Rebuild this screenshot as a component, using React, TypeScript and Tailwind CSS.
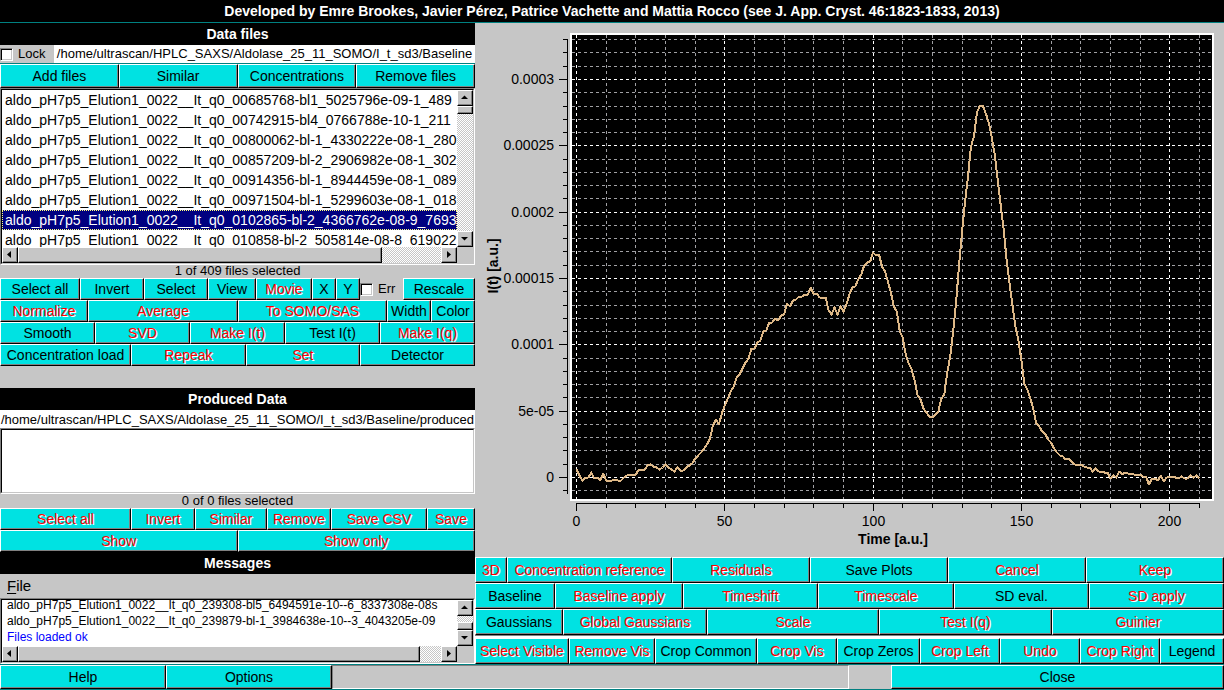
import React from "react";

type Cell = [label: string, active?: boolean];

function Btn({ label, active = false }: { label: string; active?: boolean }) {
  return (
    <button
      type="button"
      disabled={!active}
      className={
        "flex min-w-0 items-center justify-center overflow-hidden whitespace-nowrap border border-t-white border-l-white border-r-black border-b-black bg-[#00e2e2] text-sm leading-4 shadow-[inset_-1px_-1px_0_#808080] " +
        (active ? "text-black" : "text-[#ff0000] [text-shadow:1px_1px_0_#fff]")
      }
    >
      {label}
    </button>
  );
}

function Row({ cells, className }: { cells: Cell[]; className: string }) {
  return (
    <div className={"grid " + className}>
      {cells.map(([label, active]) => (
        <Btn key={label} label={label} active={active} />
      ))}
    </div>
  );
}

function Title({ children }: { children: React.ReactNode }) {
  return <h2 className="h-[22px] bg-black text-center text-sm leading-[22px] font-bold text-white">{children}</h2>;
}

const arrows = {
  up: "M4 9 L7.5 5.5 L11 9 Z",
  down: "M4 6 L11 6 L7.5 9.5 Z",
  left: "M9 4 L9 11 L5 7.5 Z",
  right: "M6 4 L6 11 L10 7.5 Z",
};

const raised =
  "border border-t-white border-l-white border-r-black border-b-black bg-[#c6c6c6] shadow-[inset_-1px_-1px_0_#808080]";
const hatch =
  "bg-[conic-gradient(#fff_25%,#c6c6c6_0_50%,#fff_0_75%,#c6c6c6_0)] bg-[length:2px_2px]";

function ArrowButton({ dir }: { dir: keyof typeof arrows }) {
  return (
    <button type="button" aria-label={"Scroll " + dir} className={"size-4 shrink-0 " + raised}>
      <svg viewBox="1 1 14 14" className="block size-full" aria-hidden="true">
        <path d={arrows[dir]} fill="#000" />
      </svg>
    </button>
  );
}

function HBar({ thumb }: { thumb: string }) {
  return (
    <div className={"flex h-4 min-w-0 " + hatch}>
      <ArrowButton dir="left" />
      <div className="min-w-0 flex-1">
        <div className={"h-full " + raised + " " + thumb} />
      </div>
      <ArrowButton dir="right" />
    </div>
  );
}

const sunken = "border border-t-[#808080] border-l-[#808080] border-r-white border-b-white";
const sunkenInner = "border border-t-black border-l-black border-r-[#c6c6c6] border-b-[#c6c6c6]";

const files = [
  "aldo_pH7p5_Elution1_0022__It_q0_00685768-bl1_5025796e-09-1_489",
  "aldo_pH7p5_Elution1_0022__It_q0_00742915-bl4_0766788e-10-1_211",
  "aldo_pH7p5_Elution1_0022__It_q0_00800062-bl-1_4330222e-08-1_280",
  "aldo_pH7p5_Elution1_0022__It_q0_00857209-bl-2_2906982e-08-1_302",
  "aldo_pH7p5_Elution1_0022__It_q0_00914356-bl-1_8944459e-08-1_089",
  "aldo_pH7p5_Elution1_0022__It_q0_00971504-bl-1_5299603e-08-1_018",
  "aldo_pH7p5_Elution1_0022__It_q0_0102865-bl-2_4366762e-08-9_7693",
  "aldo_pH7p5_Elution1_0022__It_q0_010858-bl-2_505814e-08-8_619022",
];

// Vertical position of the trace for every time step from 0 to 210.
const trace = [
  469, 475, 480, 477, 477, 472, 478, 477, 480, 473, 480, 480, 480, 479, 480, 480, 477, 475, 474, 474,
  474, 469, 469, 469, 465, 464, 466, 467, 469, 467, 464, 467, 469, 471, 467, 470, 470, 467, 465, 463,
  458, 455, 452, 448, 444, 438, 425, 419, 424, 413, 405, 398, 391, 386, 377, 374, 368, 362, 358, 348,
  348, 342, 340, 331, 330, 322, 322, 318, 320, 315, 314, 303, 306, 300, 299, 296, 296, 294, 294, 287,
  294, 293, 297, 297, 297, 310, 314, 307, 314, 306, 311, 304, 294, 287, 286, 279, 274, 265, 262, 261,
  252, 255, 254, 266, 271, 281, 292, 306, 311, 331, 337, 354, 363, 369, 380, 395, 399, 408, 412, 416,
  417, 414, 411, 398, 394, 372, 356, 331, 301, 264, 231, 201, 176, 146, 136, 112, 105, 105, 113, 122,
  137, 154, 179, 204, 228, 259, 283, 305, 326, 340, 360, 383, 389, 398, 408, 423, 426, 431, 433, 439,
  442, 448, 452, 455, 456, 459, 458, 461, 464, 464, 464, 466, 467, 467, 471, 468, 471, 471, 472, 472,
  478, 475, 477, 471, 474, 472, 473, 473, 474, 474, 474, 476, 476, 484, 478, 478, 480, 475, 481, 477,
  476, 476, 477, 478, 476, 478, 478, 475, 477, 475, 478,
];

const px = (t: number) => 576.5 + t * 2.966;
const snapX = (t: number) => Math.round(576 + t * 2.966) + 0.5;
const snapY = (k: number) => Math.round(477 - k * 13.267) + 0.5;

function Chart() {
  const xs = Array.from({ length: 22 }, (_, i) => i);
  const ys = Array.from({ length: 35 }, (_, i) => i - 1);
  const yLabels = ["0", "5e-05", "0.0001", "0.00015", "0.0002", "0.00025", "0.0003"];
  return (
    <svg viewBox="475 23 749 534" className="block w-full text-sm" role="img" aria-label="I(t) against time">
      <rect x="570" y="33" width="644" height="468" fill="#fff" />
      <rect x="572" y="35" width="640" height="464" fill="#000" />
      <g shapeRendering="crispEdges" fill="none" strokeDasharray="3 3">
        {[false, true].map((major) => (
          <g key={String(major)} stroke={major ? "#fff" : "#a0a0a4"}>
            {ys.filter((k) => k < 34 && (k % 5 === 0) === major).map((k) => (
              <path key={"y" + k} d={`M572 ${snapY(k)}H1212`} />
            ))}
            {xs.filter((i) => (i % 5 === 0) === major).map((i) => (
              <path key={"x" + i} d={`M${snapX(i * 10)} 35V499`} />
            ))}
          </g>
        ))}
      </g>
      <g shapeRendering="crispEdges" stroke="#000" fill="none">
        <path d="M567.5 39V494" />
        {ys.filter((k) => k < 34).map((k) => (
          <path key={k} d={`M${k % 5 === 0 ? 559 : 563} ${snapY(k)}H567`} />
        ))}
        <path d="M576 503.5H1200" />
        {xs.map((i) => (
          <path key={i} d={`M${snapX(i * 10)} 503V${i % 5 === 0 ? 511 : 508}`} />
        ))}
      </g>
      <polyline
        points={trace.map((y, t) => `${px(t)},${y + 0.5}`).join(" ")}
        fill="none"
        stroke="#deb887"
        strokeWidth="2"
        strokeLinejoin="round"
        shapeRendering="crispEdges"
      />
      {yLabels.map((s, i) => (
        <text key={s} x="554" y={snapY(i * 5) + 4.5} textAnchor="end">
          {s}
        </text>
      ))}
      {[0, 50, 100, 150, 200].map((t) => (
        <text key={t} x={snapX(t)} y="526" textAnchor="middle">
          {t}
        </text>
      ))}
      <text x="893" y="544" textAnchor="middle" fontWeight="bold">
        Time [a.u.]
      </text>
      <text transform="translate(498 266) rotate(-90)" textAnchor="middle" fontWeight="bold">
        I(t) [a.u.]
      </text>
    </svg>
  );
}

const check =
  "size-[13px] shrink-0 appearance-none border border-t-[#808080] border-l-[#808080] border-r-white border-b-white bg-white shadow-[inset_1px_1px_0_#000,inset_-1px_-1px_0_#c6c6c6]";

function DataFiles() {
  return (
    <section>
      <Title>Data files</Title>
      <div className="flex h-[19px] items-stretch border-b border-[#008080]">
        <label className="flex w-[54px] shrink-0 items-center gap-[5px] text-[13px]">
          <input type="checkbox" className={check} />
          Lock
        </label>
        <input
          readOnly
          aria-label="Data directory"
          value="/home/ultrascan/HPLC_SAXS/Aldolase_25_11_SOMO/I_t_sd3/Baseline"
          className="min-w-0 flex-1 bg-white text-center text-[13px] leading-4 outline-none"
        />
      </div>
      <Row
        className="h-6 grid-cols-4"
        cells={[["Add files", true], ["Similar", true], ["Concentrations", true], ["Remove files", true]]}
      />
      <div className={sunken}>
        <div className={"grid grid-cols-[minmax(0,1fr)_16px] grid-rows-[157px_16px] bg-[#c6c6c6] " + sunkenInner}>
          <ul className="overflow-hidden bg-white text-sm leading-5" aria-label="Files">
            {files.map((f, i) => (
              <li
                key={f}
                className={
                  "h-5 overflow-hidden pl-[3px] whitespace-nowrap " +
                  (i === 6
                    ? "bg-[#000080] text-white outline-1 -outline-offset-1 outline-dotted outline-[#ffff80]"
                    : "")
                }
              >
                {f}
              </li>
            ))}
          </ul>
          <div className={"flex flex-col " + hatch}>
            <ArrowButton dir="up" />
            <div className={"h-2 " + raised} />
            <div className="flex-1" />
            <ArrowButton dir="down" />
          </div>
          <HBar thumb="w-[86%]" />
        </div>
      </div>
      <p className="h-[13px] text-center text-[13px] leading-3">1 of 409 files selected</p>
      <div className="grid h-[22px] grid-cols-[80fr_64fr_64fr_48fr_56fr_24fr_24fr_43fr_72fr]">
        <Btn label="Select all" active />
        <Btn label="Invert" active />
        <Btn label="Select" active />
        <Btn label="View" active />
        <Btn label="Movie" />
        <Btn label="X" active />
        <Btn label="Y" active />
        <label className="flex min-w-0 items-center gap-[5px] text-[13px]">
          <input type="checkbox" className={check} />
          Err
        </label>
        <Btn label="Rescale" active />
      </div>
      <Row
        className="h-[22px] grid-cols-[88fr_150fr_149fr_44fr_44fr]"
        cells={[["Normalize"], ["Average"], ["To SOMO/SAS"], ["Width", true], ["Color", true]]}
      />
      <Row
        className="h-[22px] grid-cols-5"
        cells={[["Smooth", true], ["SVD"], ["Make I(t)"], ["Test I(t)", true], ["Make I(q)"]]}
      />
      <Row
        className="h-[22px] grid-cols-[131fr_115fr_114fr_115fr]"
        cells={[["Concentration load", true], ["Repeak"], ["Set"], ["Detector", true]]}
      />
    </section>
  );
}

function ProducedData() {
  return (
    <section className="mt-[22px]">
      <Title>Produced Data</Title>
      <input
        readOnly
        aria-label="Produced data directory"
        value="/home/ultrascan/HPLC_SAXS/Aldolase_25_11_SOMO/I_t_sd3/Baseline/produced"
        className="block h-[18px] w-full bg-white text-center text-[13px] leading-4 outline-none"
      />
      <div className={sunken}>
        <div className={"h-16 bg-white " + sunkenInner} />
      </div>
      <p className="h-[14px] text-center text-[13px] leading-[14px]">0 of 0 files selected</p>
      <Row
        className="h-[22px] grid-cols-[131fr_64fr_72fr_64fr_96fr_48fr]"
        cells={[["Select all"], ["Invert"], ["Similar"], ["Remove"], ["Save CSV"], ["Save"]]}
      />
      <Row className="h-[22px] grid-cols-2" cells={[["Show"], ["Show only"]]} />
    </section>
  );
}

function Messages() {
  return (
    <section>
      <Title>Messages</Title>
      <div className="flex h-6 items-center px-[7px] text-[15px]">
        <button type="button">
          <span className="underline underline-offset-2">F</span>ile
        </button>
      </div>
      <div className={sunken}>
        <div className={"grid grid-cols-[minmax(0,1fr)_16px] grid-rows-[46px_16px] bg-[#c6c6c6] " + sunkenInner}>
          <div className="flex flex-col justify-end overflow-hidden bg-white pb-px pl-[5px] text-xs leading-4 whitespace-nowrap">
            <p>aldo_pH7p5_Elution1_0022__It_q0_239308-bl5_6494591e-10--6_8337308e-08s</p>
            <p>aldo_pH7p5_Elution1_0022__It_q0_239879-bl-1_3984638e-10--3_4043205e-09</p>
            <p className="text-[#0000ff]">Files loaded ok</p>
          </div>
          <div className={"flex flex-col " + hatch}>
            <ArrowButton dir="up" />
            <div className="flex-1" />
            <div className={"h-2 " + raised} />
            <ArrowButton dir="down" />
          </div>
          <HBar thumb="w-[95%]" />
        </div>
      </div>
    </section>
  );
}

function PlotPanel() {
  return (
    <section className="flex min-w-0 flex-col">
      <Chart />
      <Row
        className="h-[26px] grid-cols-[32fr_165fr_138fr_138fr_138fr_138fr]"
        cells={[["3D"], ["Concentration reference"], ["Residuals"], ["Save Plots", true], ["Cancel"], ["Keep"]]}
      />
      <Row
        className="h-[26px] grid-cols-[80fr_128fr_135fr_136fr_135fr_135fr]"
        cells={[["Baseline", true], ["Baseline apply"], ["Timeshift"], ["Timescale"], ["SD eval.", true], ["SD apply"]]}
      />
      <Row
        className="h-[26px] grid-cols-[88fr_144fr_172fr_173fr_172fr]"
        cells={[["Gaussians", true], ["Global Gaussians"], ["Scale"], ["Test I(q)"], ["Guinier"]]}
      />
      <hr className="h-[3px] border-0 border-t border-[#808080] bg-white" />
      <Row
        className="h-[26px] grid-cols-[94fr_86fr_102fr_80fr_83fr_80fr_80fr_80fr_64fr]"
        cells={[
          ["Select Visible"],
          ["Remove Vis"],
          ["Crop Common", true],
          ["Crop Vis"],
          ["Crop Zeros", true],
          ["Crop Left"],
          ["Undo"],
          ["Crop Right"],
          ["Legend", true],
        ]}
      />
    </section>
  );
}

export default function App() {
  return (
    <div className="min-h-screen bg-[#c6c6c6] font-['Liberation_Sans',Arial,sans-serif] text-black">
      <h1 className="h-[23px] border-b border-[#008080] bg-black text-center text-sm leading-[22px] font-bold text-white">
        Developed by Emre Brookes, Javier Pérez, Patrice Vachette and Mattia Rocco (see J. App. Cryst. 46:1823-1833, 2013)
      </h1>
      <main className="grid grid-cols-[minmax(0,475fr)_minmax(0,749fr)]">
        <div>
          <DataFiles />
          <ProducedData />
          <Messages />
        </div>
        <PlotPanel />
      </main>
      <footer className="grid h-[26px] grid-cols-[166fr_166fr_517fr_42fr_333fr] border-y border-[#008080]">
        <Btn label="Help" active />
        <Btn label="Options" active />
        <div className="border border-t-[#808080] border-l-[#808080] border-r-white border-b-white" />
        <div />
        <Btn label="Close" active />
      </footer>
    </div>
  );
}
